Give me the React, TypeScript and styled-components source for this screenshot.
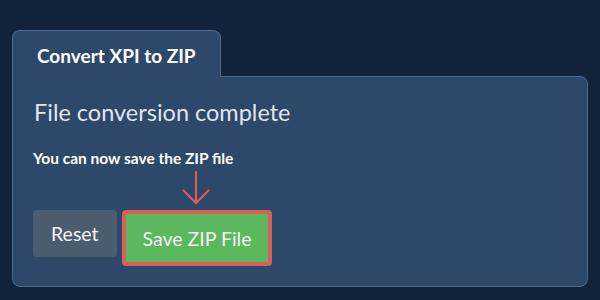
import React from 'react';
import styled, { createGlobalStyle } from 'styled-components';

const GlobalStyle = createGlobalStyle`
  html, body {
    margin: 0;
    padding: 0;
    background: #11233a;
    font-family: Lato, "Noto Sans", sans-serif;
  }
`;

const Page = styled.div`
  width: 600px;
  height: 300px;
  box-sizing: border-box;
  padding: 30px 12px 0 12px;
  display: flex;
  flex-direction: column;
`;

const TabRow = styled.div`
  display: flex;
`;

const Tab = styled.div`
  position: relative;
  z-index: 1;
  height: 47px;
  box-sizing: border-box;
  padding: 2px 24px 0 24px;
  display: flex;
  align-items: center;
  background: #2d4868;
  border: 1px solid #4f6a8a;
  border-bottom: none;
  border-radius: 8px 8px 0 0;
  margin-bottom: -1px;
  color: #ffffff;
  font-weight: 700;
  font-size: 19px;
`;

const Panel = styled.div`
  width: 576px;
  height: 211px;
  box-sizing: border-box;
  background: #2d4868;
  border: 1px solid #4f6a8a;
  border-radius: 0 8px 8px 8px;
  padding: 20px 20px 0 20px;
  display: flex;
  flex-direction: column;
`;

const Heading = styled.h2`
  margin: 0 0 0 1px;
  font-weight: 400;
  font-size: 23.5px;
  line-height: 30px;
  color: #dfe6ee;
`;

const Message = styled.p`
  margin: 22px 0 0 0;
  font-weight: 700;
  font-size: 15.5px;
  line-height: 18px;
  color: #ffffff;
`;

const ArrowWrap = styled.div`
  height: 43px;
  padding-left: 148px;
  display: flex;
  align-items: flex-end;
  padding-bottom: 4px;
  box-sizing: border-box;
`;

const Actions = styled.div`
  display: flex;
  align-items: flex-start;
  gap: 5px;
`;

const Button = styled.button<{ $variant: 'plain' | 'primary' }>`
  font-family: inherit;
  font-size: 19.5px;
  color: #f2f4f6;
  border-radius: 4px;
  cursor: pointer;
  box-sizing: border-box;
  background: ${(p) => (p.$variant === 'primary' ? '#5cb85c' : '#4b5c6e')};
  border: ${(p) => (p.$variant === 'primary' ? '4px solid #d9605a' : 'none')};
  height: ${(p) => (p.$variant === 'primary' ? '56px' : '47px')};
  padding: ${(p) => (p.$variant === 'primary' ? '0 17px' : '0 18px')};
`;

const DownArrow = () => (
  <svg width="30" height="36" viewBox="0 0 30 36" fill="none" stroke="#d9605a" strokeWidth="2.2">
    <path d="M15 1 V34" />
    <path d="M2 20 L15 33 L28 20" />
  </svg>
);

const App: React.FC = () => {
  return (
    <>
      <GlobalStyle />
      <Page>
        <TabRow>
          <Tab>Convert XPI to ZIP</Tab>
        </TabRow>
        <Panel>
          <Heading>File conversion complete</Heading>
          <Message>You can now save the ZIP file</Message>
          <ArrowWrap>
            <DownArrow />
          </ArrowWrap>
          <Actions>
            <Button $variant="plain">Reset</Button>
            <Button $variant="primary">Save ZIP File</Button>
          </Actions>
        </Panel>
      </Page>
    </>
  );
};

export default App;
